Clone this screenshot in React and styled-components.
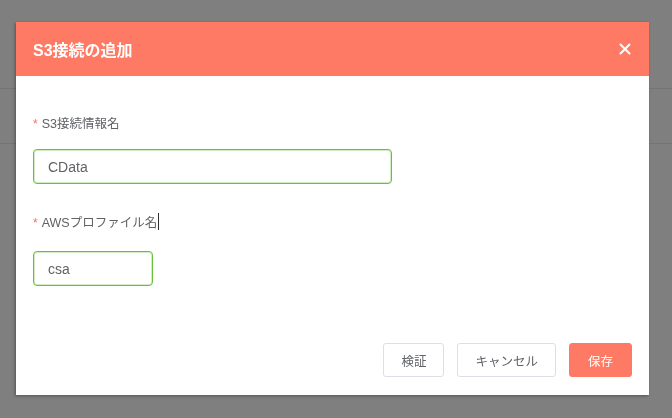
import React from "react";
import styled, { createGlobalStyle } from "styled-components";

const GlobalStyle = createGlobalStyle`
    html, body {
        margin: 0;
        padding: 0;
        height: 100%;
        background: #ffffff;
        font-family: "Liberation Sans", "Noto Sans CJK JP", sans-serif;
    }
`;

const Page = styled.div`
    height: 418px;
    background: #ffffff;
`;

const TopBar = styled.div`
    height: 88px;
    border-bottom: 1px solid #e9e9e9;
`;

const SubBar = styled.div`
    height: 54px;
    border-bottom: 1px solid #e9e9e9;
`;

const Overlay = styled.div`
    position: fixed;
    inset: 0;
    background: rgba(0, 0, 0, 0.5);
    padding: 22px 0 0 16px;
`;

const Dialog = styled.div`
    width: 633px;
    background: #ffffff;
    box-shadow: -1px 1px 3px rgba(0, 0, 0, 0.35);
`;

const Header = styled.div`
    height: 54px;
    padding: 0 18px 0 17px;
    background: #ff7a64;
    display: flex;
    align-items: center;
    justify-content: space-between;
`;

const Title = styled.span`
    color: #ffffff;
    font-size: 16px;
    font-weight: bold;
`;

const CloseButton = styled.button`
    border: none;
    background: none;
    padding: 0;
    width: 12px;
    height: 12px;
    display: flex;
    cursor: pointer;
`;

const Body = styled.div`
    padding: 36px 17px 0;
`;

const Field = styled.div`
    & + & {
        margin-top: 27px;
    }
`;

const Label = styled.label`
    display: flex;
    align-items: center;
    height: 20px;
    margin-bottom: ${(p) => p.$gap}px;
    font-size: 12.5px;
    color: #606266;
`;

const Required = styled.span`
    color: #f56c6c;
    margin-right: 4px;
    font-size: 12px;
    position: relative;
    top: 2px;
`;

const Caret = styled.span`
    display: inline-block;
    width: 1px;
    height: 17px;
    margin-left: 1px;
    background: #303133;
`;

const Input = styled.input`
    box-sizing: border-box;
    display: block;
    width: ${(p) => p.$width}px;
    height: 35px;
    padding: 0 14px;
    border: 1px solid #67c23a;
    border-radius: 4px;
    box-shadow: inset 0 0 0 1px rgba(103, 194, 58, 0.3);
    outline: none;
    font-family: "Liberation Sans", "Noto Sans CJK JP", sans-serif;
    font-size: 14px;
    color: #606266;
    background: #ffffff;
`;

const Footer = styled.div`
    display: flex;
    justify-content: flex-end;
    gap: 13px;
    margin-top: 57px;
    padding: 0 17px 18px;
`;

const Button = styled.button`
    height: 34px;
    padding: 0 ${(p) => (p.$primary ? 18 : 17)}px;
    border: 1px solid ${(p) => (p.$primary ? "#ff7a64" : "#dcdfe6")};
    border-radius: 3px;
    background: ${(p) => (p.$primary ? "#ff7a64" : "#ffffff")};
    color: ${(p) => (p.$primary ? "#ffffff" : "#606266")};
    font-family: "Liberation Sans", "Noto Sans CJK JP", sans-serif;
    font-size: 12.5px;
    cursor: pointer;
`;

const App = () => {
    return <>
        <GlobalStyle />
        <Page>
            <TopBar />
            <SubBar />
        </Page>
        <Overlay>
            <Dialog>
                <Header>
                    <Title>S3接続の追加</Title>
                    <CloseButton aria-label="close">
                        <svg width="12" height="12" viewBox="0 0 12 12">
                            <path d="M1.5 1.5 L10.5 10.5 M10.5 1.5 L1.5 10.5" stroke="#ffffff" strokeWidth="2" strokeLinecap="round" />
                        </svg>
                    </CloseButton>
                </Header>
                <Body>
                    <Field>
                        <Label $gap={17}><Required>*</Required>S3接続情報名</Label>
                        <Input $width={359} defaultValue="CData" />
                    </Field>
                    <Field>
                        <Label $gap={20}><Required>*</Required>AWSプロファイル名<Caret /></Label>
                        <Input $width={120} defaultValue="csa" />
                    </Field>
                </Body>
                <Footer>
                    <Button>検証</Button>
                    <Button>キャンセル</Button>
                    <Button $primary>保存</Button>
                </Footer>
            </Dialog>
        </Overlay>
    </>;
};

export default App;
